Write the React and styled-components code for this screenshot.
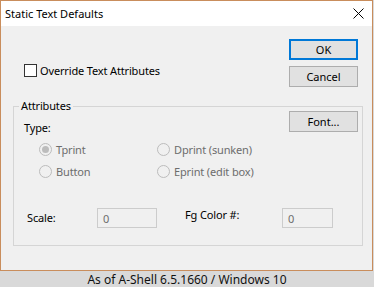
import React from 'react';
import styled, { createGlobalStyle } from 'styled-components';

const GlobalStyle = createGlobalStyle`
  body {
    margin: 0;
    background: #d9d9d9;
    font-family: "Noto Sans", "Open Sans", sans-serif;
    color: #000;
  }
`;

const Screen = styled.div`
  width: 374px;
  height: 287px;
  display: flex;
  flex-direction: column;
  overflow: hidden;
`;

const Window = styled.div`
  width: 373px;
  height: 271px;
  box-sizing: border-box;
  border: 1px solid #c98d5c;
  background: #f0f0f0;
  display: flex;
  flex-direction: column;
`;

const TitleBar = styled.div`
  height: 25px;
  flex: none;
  background: #fff;
  display: flex;
  align-items: center;
  justify-content: space-between;
  padding: 0 8px 0 4px;
  font-size: 11px;
`;

const CloseIcon = () => (
  <svg width="11" height="11" viewBox="0 0 11 11">
    <path d="M0.5 0.5 L10.5 10.5 M10.5 0.5 L0.5 10.5" stroke="#000" strokeWidth="1" />
  </svg>
);

const Body = styled.div`
  flex: 1;
  padding: 0 9px 0 12px;
  display: flex;
  flex-direction: column;
  font-size: 11px;
  letter-spacing: -0.15px;
`;

const TopSection = styled.div`
  margin-top: 13px;
  padding-right: 5px;
  display: flex;
  justify-content: space-between;
`;

const CheckRow = styled.label`
  margin: 25px 0 0 11px;
  display: flex;
  align-items: center;
  gap: 3px;
  height: 13px;
  line-height: 13px;
`;

const CheckBox = styled.span`
  width: 13px;
  height: 13px;
  box-sizing: border-box;
  border: 1px solid #333;
  background: #fff;
`;

const ButtonColumn = styled.div`
  display: flex;
  flex-direction: column;
  gap: 6px;
`;

const Button = styled.button`
  width: 69px;
  height: 21px;
  box-sizing: border-box;
  padding: 0;
  margin: 0;
  font: inherit;
  font-size: 11px;
  color: #000;
  background: #e1e1e1;
  border: ${(p) => (p.$default ? '2px solid #0078d7' : '1px solid #adadad')};
`;

const GroupBox = styled.div`
  position: relative;
  margin-top: 19px;
  border: 1px solid #d5d5d5;
  padding-bottom: 17px;
  display: flex;
  flex-direction: column;
`;

const Legend = styled.span`
  position: absolute;
  top: -8px;
  left: 5px;
  padding: 0 2px;
  background: #f0f0f0;
  line-height: 14px;
`;

const HeaderRow = styled.div`
  padding: 4px 4px 0 10px;
  display: flex;
  justify-content: space-between;
  align-items: flex-start;
`;

const Label = styled.span`
  line-height: 14px;
  margin-top: ${(p) => p.$top || 0}px;
  color: ${(p) => (p.$disabled ? '#6d6d6d' : '#000')};
`;

const RadioGrid = styled.div`
  margin-top: 8px;
  padding-left: 25px;
  display: grid;
  grid-template-columns: 118px auto;
  grid-auto-rows: 13px;
  row-gap: 9px;
`;

const RadioItem = styled.div`
  display: flex;
  align-items: center;
  gap: 4px;
  color: #6d6d6d;
`;

const RadioCircle = styled.span`
  width: 13px;
  height: 13px;
  box-sizing: border-box;
  border-radius: 50%;
  border: 1px solid #bcbcbc;
  background: #f0f0f0;
  display: flex;
  align-items: center;
  justify-content: center;

  &::after {
    content: '';
    width: 7px;
    height: 7px;
    border-radius: 50%;
    background: ${(p) => (p.$checked ? '#bcbcbc' : 'transparent')};
  }
`;

const FieldRow = styled.div`
  margin-top: 30px;
  padding-left: 13px;
  display: grid;
  grid-template-columns: 70px 60px 28px 97px 51px;
  align-items: center;
  height: 20px;
`;

const FieldLabel = styled.span`
  line-height: 14px;
  margin-bottom: ${(p) => p.$raise || 0}px;
`;

const FieldInput = styled.div`
  height: 20px;
  box-sizing: border-box;
  border: 1px solid #cccccc;
  background: #f0f0f0;
  color: #6d6d6d;
  padding-left: 5px;
  display: flex;
  align-items: center;
`;

const Caption = styled.div`
  height: 16px;
  display: flex;
  align-items: center;
  justify-content: center;
  font-size: 12px;
  color: #111;
`;

const radios = [
  { label: 'Tprint', checked: true },
  { label: 'Dprint (sunken)' },
  { label: 'Button' },
  { label: 'Eprint (edit box)' },
];

const App = () => {
  return (
    <>
      <GlobalStyle />
      <Screen>
        <Window>
          <TitleBar>
            Static Text Defaults
            <CloseIcon />
          </TitleBar>
          <Body>
            <TopSection>
              <CheckRow>
                <CheckBox />
                Override Text Attributes
              </CheckRow>
              <ButtonColumn>
                <Button $default>OK</Button>
                <Button>Cancel</Button>
              </ButtonColumn>
            </TopSection>
            <GroupBox>
              <Legend>Attributes</Legend>
              <HeaderRow>
                <Label $top={10}>Type:</Label>
                <Button>Font...</Button>
              </HeaderRow>
              <RadioGrid>
                {radios.map((r) => (
                  <RadioItem key={r.label}>
                    <RadioCircle $checked={r.checked} />
                    {r.label}
                  </RadioItem>
                ))}
              </RadioGrid>
              <FieldRow>
                <FieldLabel>Scale:</FieldLabel>
                <FieldInput>0</FieldInput>
                <span />
                <FieldLabel $raise={6}>Fg Color #:</FieldLabel>
                <FieldInput>0</FieldInput>
              </FieldRow>
            </GroupBox>
          </Body>
        </Window>
        <Caption>As of A-Shell 6.5.1660 / Windows 10</Caption>
      </Screen>
    </>
  );
};

export default App;
